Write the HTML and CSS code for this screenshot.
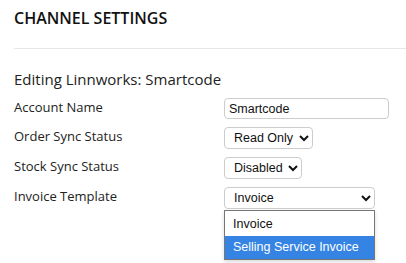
FILE: index.html
```html
<!DOCTYPE html>
<html>
<head>
  <meta charset="UTF-8">
  <title>Channel Settings</title>
  <link rel="stylesheet" href="styles.css">
</head>
<body>
  <h1 class="page-title">CHANNEL SETTINGS</h1>
  <hr class="divider">

  <h2 class="section-title">Editing Linnworks: Smartcode</h2>

  <div class="settings-form">
    <label class="field-label" for="accountName">Account Name</label>
    <div class="field-control">
      <input type="text" id="accountName" class="text-input" value="Smartcode">
    </div>

    <label class="field-label" for="orderSync">Order Sync Status</label>
    <div class="field-control">
      <select id="orderSync" class="select-input">
        <option>Read Only</option>
      </select>
    </div>

    <label class="field-label" for="stockSync">Stock Sync Status</label>
    <div class="field-control">
      <select id="stockSync" class="select-input">
        <option>Disabled</option>
      </select>
    </div>

    <label class="field-label" for="invoiceTemplate">Invoice Template</label>
    <div class="field-control dropdown-wrap">
      <select id="invoiceTemplate" class="select-input wide">
        <option>Invoice</option>
      </select>
      <!-- open list of the template select -->
      <div class="dropdown-list">
        <div class="dropdown-item">Invoice</div>
        <div class="dropdown-item selected">Selling Service Invoice</div>
      </div>
    </div>
  </div>
</body>
</html>
```

FILE: styles.css
```css
* {
  margin: 0;
  padding: 0;
  box-sizing: border-box;
}

html, body {
  min-height: 100%;
}

body {
  font-family: 'Open Sans', sans-serif;
  background: #ffffff;
  color: #222222;
  padding: 7px 14px;
  min-height: 100vh;
}

.page-title {
  font-size: 16px;
  font-weight: 600;
  color: #111111;
  line-height: 22px;
}

.divider {
  border: none;
  border-top: 1px solid #e6e6e6;
  margin: 19px -14px 0 0;
}

.section-title {
  font-size: 15px;
  font-weight: 400;
  color: #222222;
  line-height: 20px;
  margin-top: 20px;
}

.settings-form {
  display: grid;
  grid-template-columns: 210px 1fr;
  row-gap: 8px;
  margin-top: 9px;
  align-items: start;
}

.field-label {
  font-size: 13px;
  line-height: 18px;
  color: #222222;
}

.field-control {
  display: flex;
}

.text-input {
  width: 165px;
  height: 21px;
  border: 1px solid #cccccc;
  border-radius: 4px;
  padding: 0 4px;
  font-family: 'Liberation Sans', Arial, sans-serif;
  font-size: 12.5px;
  color: #111111;
}

.select-input {
  height: 22px;
  border: 1px solid #cccccc;
  border-radius: 4px;
  background: #ffffff;
  padding: 0 2px 0 5px;
  font-family: 'Liberation Sans', Arial, sans-serif;
  font-size: 12.5px;
  color: #111111;
}

.select-input.wide {
  width: 151px;
}

.dropdown-wrap {
  position: relative;
}

.dropdown-list {
  position: absolute;
  top: 23px;
  left: 0;
  z-index: 10;
  width: 151px;
  background: #ffffff;
  border: 1px solid #767676;
  font-family: 'Liberation Sans', Arial, sans-serif;
  font-size: 12.5px;
  color: #111111;
  padding: 2px 0 0;
  box-shadow: 0 2px 4px rgba(0, 0, 0, 0.15);
}

.dropdown-item {
  padding: 0 8px;
  line-height: 23px;
}

.dropdown-item.selected {
  background: #3584e4;
  color: #ffffff;
}
```
